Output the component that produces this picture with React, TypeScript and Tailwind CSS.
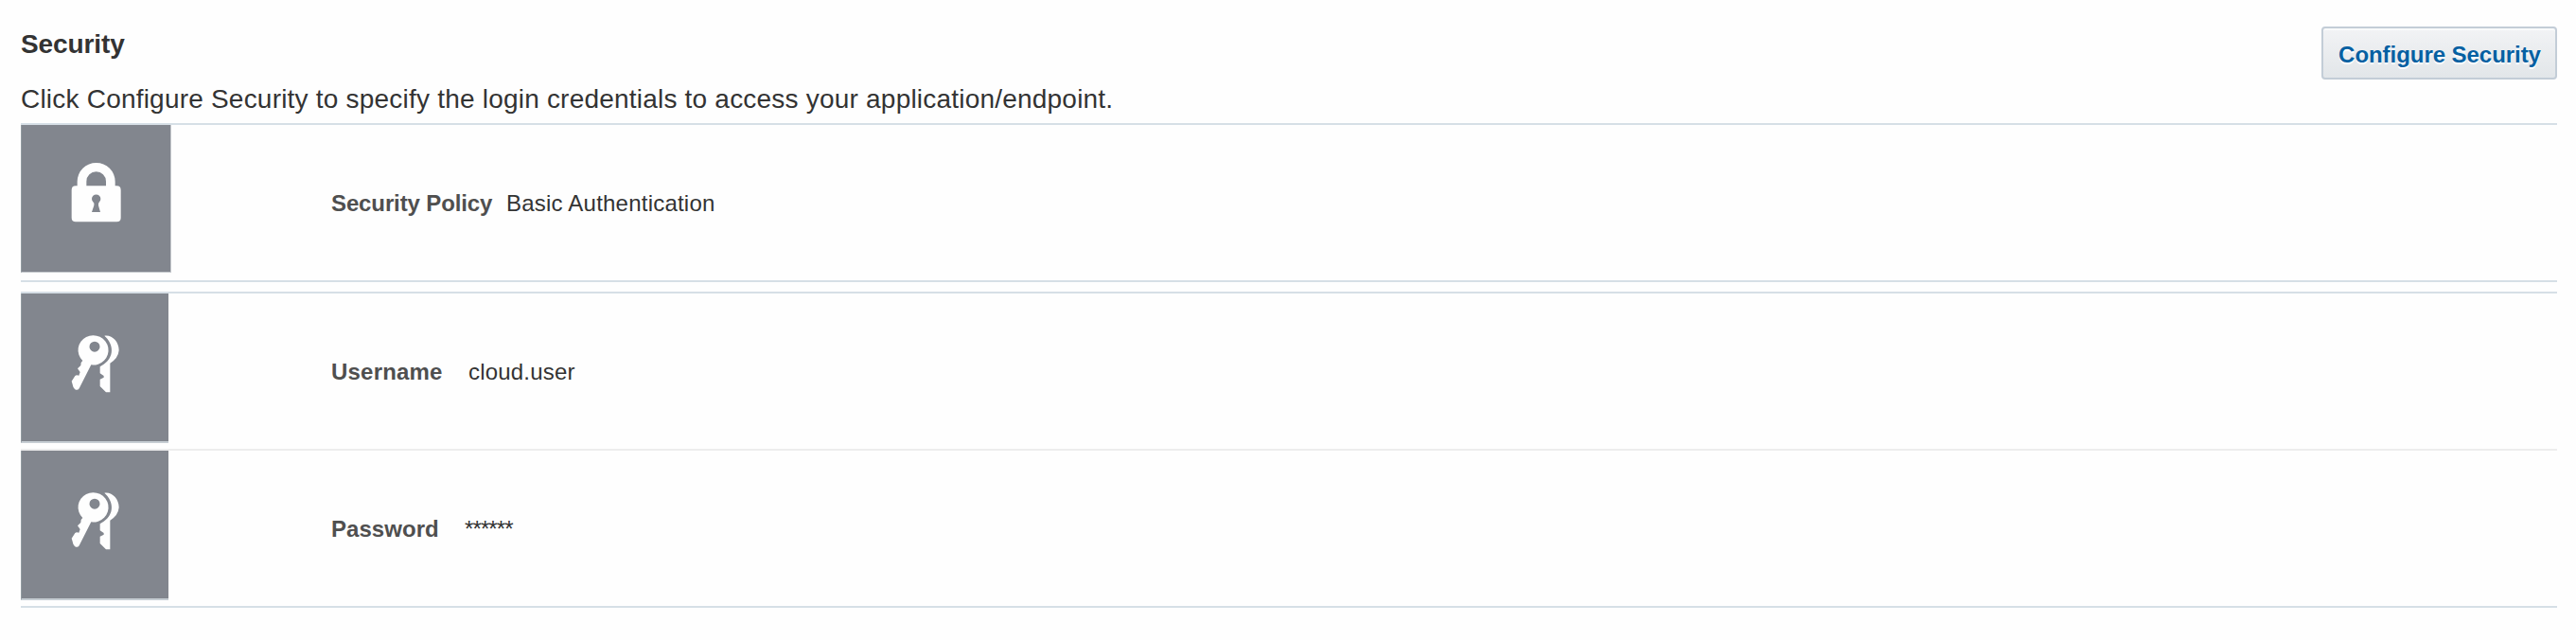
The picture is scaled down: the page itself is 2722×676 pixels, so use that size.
import React from "react";

function LockTile() {
  return (
    <div className="h-[156px] w-[159px] border-r border-b border-l border-r-[#c5c9cd] border-b-[#c5c9cd] border-l-[#929ba1] bg-[#82868e]">
      <svg viewBox="69 36 471 465" className="h-[155px] w-[157px]" fill="#fefefe">
        <path
          fillRule="evenodd"
          d="M245 229 V215 A60 59 0 0 1 365 215 V229 H370 Q383 229 383 242 V330 Q383 343 370 343 H240 Q227 343 227 330 V242 Q227 229 240 229 Z M274 229 H336 V215 A31 31 0 0 0 274 215 Z M291 312 H318 L312 291 Q311 284 315 280 A14 14 0 1 0 295 280 Q300 284 298 291 Z"
        />
      </svg>
    </div>
  );
}

function KeysTile() {
  return (
    <div className="h-[158px] w-[156px] border-b-2 border-l border-b-[#c6cdd3] border-l-[#929ba1] bg-[#82868e]">
      <svg viewBox="69 60 465 468" className="h-[156px] w-[155px]" fill="#fefefe">
        <path
          fillRule="evenodd"
          d="M262 273 A48 47 0 1 1 289 286 L251 361 Q247 367 240 365 Q232 361 230 348 L227 338 L238 321 Q242 317 250 320 L254 309 L246 298 L256 288 L257 279 Z M300 212 A16.5 16.5 0 1 0 300 245 A16.5 16.5 0 1 0 300 212 Z"
        />
        <path d="M331 194 C355 190 377 212 377 240 Q375 265 349 281 V373 H336 L317 354 V332 L329 326 V321 L317 313 V292 L329 284 C362 262 362 221 331 194 Z" />
      </svg>
    </div>
  );
}

export default function App() {
  return (
    <main className="h-[676px] w-[2722px] bg-[#fefefe] px-5 pl-[22px] font-['Liberation_Sans',Arial,sans-serif] text-[#333333]">
      <header className="flex h-[130px] justify-between">
        <div className="pt-[31px]">
          <h1 className="text-[28px] leading-8 font-bold tracking-[-0.1px]">Security</h1>
          <p className="mt-[26px] text-[28px] leading-8 tracking-[0.21px] whitespace-nowrap">
            Click Configure Security to specify the login credentials to access your application/endpoint.
          </p>
        </div>
        <button className="mt-7 flex h-14 w-[249px] items-center justify-center rounded-[4px] border-2 border-[#c3cdd7] bg-linear-to-b from-[#f2f3f5] to-[#e2e6e9] pt-[4px] pl-px text-[24px] leading-7 font-bold tracking-[-0.05px] whitespace-nowrap text-[#0560a2] [box-shadow:inset_0_2px_0_#f9fafb] [text-shadow:0_2px_0_#ffffff]">
          Configure Security
        </button>
      </header>

      <section className="flex h-[168px] border-y-2 border-[#d6dfe6]">
        <LockTile />
        <div className="flex pt-[69px] pl-[169px] text-[24px] leading-7">
          <span className="w-[185px] font-bold tracking-[-0.12px] text-[#4f4f4f]">Security Policy</span>
          <span className="tracking-[0.22px]">Basic Authentication</span>
        </div>
      </section>

      <section className="mt-[10px] border-y-2 border-[#d6dfe6]">
        <div className="flex h-[166px] border-b-2 border-[#ededed]">
          <KeysTile />
          <div className="flex pt-[69px] pl-[172px] text-[24px] leading-7">
            <span className="w-[145px] font-bold tracking-[0.2px] text-[#4f4f4f]">Username</span>
            <span className="tracking-[0.2px]">cloud.user</span>
          </div>
        </div>
        <div className="flex h-[164px]">
          <KeysTile />
          <div className="flex pt-[69px] pl-[172px] text-[24px] leading-7">
            <span className="w-[141px] font-bold tracking-[0.05px] text-[#4f4f4f]">Password</span>
            <span className="tracking-[-0.9px]">******</span>
          </div>
        </div>
      </section>
    </main>
  );
}
